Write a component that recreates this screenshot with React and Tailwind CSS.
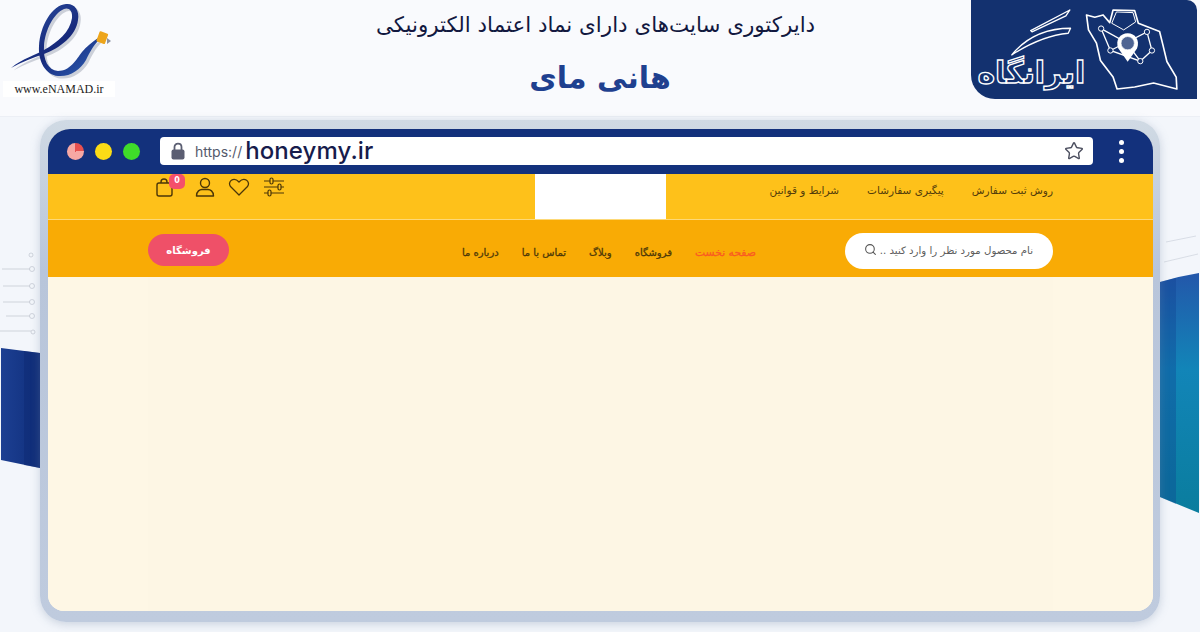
import { Star, Search } from 'lucide-react';

const topLinks = ['روش ثبت سفارش', 'پیگیری سفارشات', 'شرایط و قوانین'];
const menuLinks = ['فروشگاه', 'وبلاگ', 'تماس با ما', 'درباره ما'];

const eRibbon = 'M13 68 C25 58 38 55 46 50 C60 42 72 32 74 18 C75 10 70 7 66 9 C56 13 47 30 46 46 C45 60 50 70 60 71 C72 71 78 60 84 52 C88 47 94 42 100 38 L101 40 C95 46 92 52 88 60 C82 70 72 77 60 76 C48 75 40 62 41 46 C42 26 54 5 68 4 C76 3 82 10 80 20 C78 36 62 48 46 54 C34 58 24 62 13 68 Z';

function NamadLogo() {
    return (
        <div className="flex flex-col items-start w-[118px]">
            <svg width="116" height="78" viewBox="2 3 116 78" className="mt-[3px]">
                <defs>
                    <linearGradient id="namadBlue" x1="0" y1="0" x2="1" y2="1">
                        <stop offset="0" stopColor="#2f54a8" />
                        <stop offset="0.55" stopColor="#16287a" />
                        <stop offset="1" stopColor="#2f62b8" />
                    </linearGradient>
                </defs>
                <path d={eRibbon} fill="#b9bdc9" opacity="0.7" transform="translate(2.5 2.5)" />
                <path d={eRibbon} fill="url(#namadBlue)" />
                <rect x="100" y="32" width="9" height="11" rx="1" fill="#eda51c" transform="rotate(20 104 37)" />
                <path d="M109 38 L113 41 L109 44 Z" fill="#8c93a3" />
            </svg>
            <div className="bg-white ml-[3px] w-[112px] h-[16px] flex items-center justify-center font-['Liberation_Serif',serif] text-[12px] leading-none text-[#222]">
                www.eNAMAD.ir
            </div>
        </div>
    );
}

function IranLogo() {
    return (
        <div className="w-[226px] h-[99px] bg-[#13316f] rounded-bl-[24px] rounded-tr-[10px]">
            <svg width="226" height="99" viewBox="215 0 675 298">
                <path d="M560 45 L585 52 L610 45 L630 68 L640 30 L705 32 L716 70 L780 95 L790 135 L802 185 L830 232 L832 268 L762 250 L705 262 L652 268 L640 232 L602 182 L590 130 L566 90 Z" fill="none" stroke="#fff" strokeWidth="5" strokeLinejoin="round" />
                <path d="M636 70 L650 36 L700 38 L708 66 L672 90 Z" fill="none" stroke="#fff" strokeWidth="3" />
                <path d="M604 86 L680 128 L742 96 L757 152 L722 184 L632 152 Z M632 152 L680 128 L722 184" fill="none" stroke="#fff" strokeWidth="4" />
                <circle cx="604" cy="86" r="8" fill="#13316f" stroke="#fff" strokeWidth="3" />
                <circle cx="742" cy="96" r="8" fill="#13316f" stroke="#fff" strokeWidth="3" />
                <circle cx="757" cy="152" r="8" fill="#13316f" stroke="#fff" strokeWidth="3" />
                <circle cx="632" cy="152" r="8" fill="#13316f" stroke="#fff" strokeWidth="3" />
                <circle cx="722" cy="184" r="8" fill="#13316f" stroke="#fff" strokeWidth="3" />
                <path d="M684 186 L656 146 C645 120 662 100 684 100 C706 100 722 120 712 146 Z" fill="#fff" />
                <circle cx="684" cy="130" r="20" fill="#13316f" stroke="#fff" strokeWidth="2" opacity="0.75" />
                <path d="M335 165 C385 105 445 85 512 85 L505 100 C450 105 390 130 335 165 Z" fill="none" stroke="#fff" strokeWidth="4" strokeLinejoin="round" />
                <path d="M392 92 L510 30 L498 48 L396 96 Z" fill="none" stroke="#fff" strokeWidth="4" strokeLinejoin="round" />
                <text x="556" y="250" direction="rtl" fontFamily="DejaVu Sans" fontWeight="700" fontSize="90" fill="#13316f" stroke="#fff" strokeWidth="4" letterSpacing="-2">ایرانگاه</text>
            </svg>
        </div>
    );
}

function Decorations() {
    return (
        <>
            <svg className="absolute left-0 top-[240px]" width="40" height="240" viewBox="0 0 40 240">
                <defs>
                    <linearGradient id="leftBand" x1="0" y1="0" x2="1" y2="0">
                        <stop offset="0" stopColor="#1c3f92" />
                        <stop offset="1" stopColor="#102f7c" />
                    </linearGradient>
                </defs>
                <g fill="none" stroke="#b4bac6" strokeWidth="0.7" opacity="0.8">
                    <path d="M2 29 H30 M3 46 H30 M3 62 H30 M6 76 H30 M0 91 H31" />
                    <circle cx="31" cy="15" r="2" />
                    <circle cx="32" cy="29" r="2.5" />
                    <circle cx="32" cy="46" r="2.5" />
                    <circle cx="32" cy="62" r="2.5" />
                    <circle cx="32" cy="76" r="2.5" />
                    <circle cx="33" cy="92" r="2" />
                </g>
                <path d="M1 108 L40 113 V228 L1 220 Z" fill="url(#leftBand)" />
                <path d="M24 111 L40 113 V228 L24 225 Z" fill="#0e2a74" opacity="0.5" />
            </svg>
            <svg className="absolute right-0 top-[232px]" width="40" height="290" viewBox="0 0 40 290">
                <defs>
                    <linearGradient id="rightBand" x1="0" y1="0" x2="0" y2="1">
                        <stop offset="0" stopColor="#2357aa" />
                        <stop offset="0.4" stopColor="#1285b8" />
                        <stop offset="1" stopColor="#0a7d9e" />
                    </linearGradient>
                </defs>
                <path d="M6 10 L36 4 M4 30 L38 22" stroke="#cdd2dc" strokeWidth="0.7" fill="none" />
                <path d="M0 50 Q20 44 39 41 V281 L0 265 Z" fill="url(#rightBand)" />
                <path d="M0 50 L16 46 V272 L0 265 Z" fill="#0f3f8f" opacity="0.35" />
            </svg>
        </>
    );
}

function TopIcons() {
    return (
        <div className="flex items-start text-[#4b3608] pt-[3px]">
            <svg width="22" height="22" viewBox="0 0 22 22" fill="none" stroke="currentColor" strokeWidth="1.4">
                <path d="M7 6 V5 C7 1 13 1 13 5 V6" />
                <rect x="3" y="6" width="15" height="13" rx="2" />
            </svg>
            <svg width="20" height="21" viewBox="0 0 20 21" fill="none" stroke="currentColor" strokeWidth="1.4" className="ml-[19px]">
                <circle cx="10" cy="6" r="4.5" />
                <path d="M1.5 19 C1.5 14 5 12.5 7 12.5 H13 C15 12.5 18.5 14 18.5 19 Z" strokeLinejoin="round" />
            </svg>
            <svg width="22" height="20" viewBox="0 0 22 20" fill="none" stroke="currentColor" strokeWidth="1.3" className="ml-[13px]">
                <path d="M11 18 L2.5 9.5 C-1 5 5.5 -1 11 5 C16.5 -1 23 5 19.5 9.5 Z" strokeLinejoin="round" />
            </svg>
            <svg width="22" height="20" viewBox="0 0 22 20" fill="none" stroke="currentColor" strokeWidth="1.2" className="ml-[13px]">
                <path d="M1 4 H21 M1 10 H21 M1 16 H21" />
                <rect x="7" y="1" width="3" height="6" rx="1.5" fill="#fec11a" />
                <rect x="15" y="7" width="3" height="6" rx="1.5" fill="#fec11a" />
                <rect x="5" y="13" width="3" height="6" rx="1.5" fill="#fec11a" />
            </svg>
        </div>
    );
}

export default function App() {
    return (
        <div className="relative w-[1200px] h-[632px] overflow-hidden bg-[#f3f6fb] font-['DejaVu_Sans',sans-serif]">
            <Decorations />

            <header className="relative flex h-[117px] items-start bg-[#f9fafd] border-b border-[#eceff5]">
                <NamadLogo />
                <div dir="rtl" className="absolute left-0 top-0 w-[1191px] flex flex-col items-center pointer-events-none">
                    <div className="mt-[11px] text-[21.4px] leading-[28px] text-[#12183f]">دایرکتوری سایت‌های دارای نماد اعتماد الکترونیکی</div>
                    <div className="mt-[16px] mr-[-9px] text-[30px] leading-[46px] font-bold text-[#1f408f]">هانی مای</div>
                </div>
                <div className="ml-auto mr-[3px]">
                    <IranLogo />
                </div>
            </header>

            <main className="relative ml-[40px] mt-[3px] w-[1120px] h-[502px] rounded-[26px] bg-[linear-gradient(#d0dae4,#b8c5da_30%,#bfcbde)] pt-[9px] pb-[11px] pl-[8px] pr-[7px] shadow-[0_2px_10px_rgba(120,140,170,0.35)]">
                <div className="flex flex-col h-full rounded-t-[22px] rounded-b-[16px] overflow-hidden bg-[#fef7e5]">
                    <div className="flex h-[45px] pb-[1px] items-center shrink-0 bg-[#13317c] pl-[19px] pr-[29px]">
                        <div className="flex gap-[11px]">
                            <span className="w-[17px] h-[17px] rounded-full bg-[conic-gradient(#e8504f_0_25%,#f7a8a4_25%_100%)]" />
                            <span className="w-[17px] h-[17px] rounded-full bg-[#fbdc16]" />
                            <span className="w-[17px] h-[17px] rounded-full bg-[#3fdc2a]" />
                        </div>
                        <div className="ml-[20px] flex items-center w-[933px] h-[28px] rounded-[4px] bg-white pl-[11px] pr-[9px]">
                            <svg width="14" height="18" viewBox="0 0 14 18" fill="#5b5e72">
                                <path d="M3.5 8 V5 C3.5 0.5 10.5 0.5 10.5 5 V8" fill="none" stroke="#5b5e72" strokeWidth="1.8" />
                                <rect x="0.5" y="7.5" width="13" height="10" rx="2" />
                            </svg>
                            <span className="ml-[10px] font-['Inter',sans-serif] text-[14px] text-[#555a6c]">https://</span>
                            <span className="ml-[3px] font-['Inter',sans-serif] text-[24px] leading-none font-medium tracking-[0.1px] text-[#171c4c]">honeymy.ir</span>
                            <Star className="ml-auto text-[#4d5060]" size={20} strokeWidth={1.7} />
                        </div>
                        <div className="ml-auto flex flex-col gap-[4px]">
                            <span className="w-[5px] h-[5px] rounded-full bg-white" />
                            <span className="w-[5px] h-[5px] rounded-full bg-white" />
                            <span className="w-[5px] h-[5px] rounded-full bg-white" />
                        </div>
                    </div>

                    <div className="relative flex h-[46px] shrink-0 items-start bg-[#fec11a] border-b border-[#fdd977] pl-[106px] pr-[100px]">
                        <TopIcons />
                        <div className="absolute left-[487px] top-0 w-[131px] h-[45px] bg-white" />
                        <nav dir="rtl" className="ml-auto flex gap-[28px] pt-[9px] text-[10.5px] leading-[15px] text-[#533c0a]">
                            {topLinks.map((link) => (
                                <a key={link}>{link}</a>
                            ))}
                        </nav>
                        <span className="absolute left-[121px] top-0 w-[16px] h-[15px] rounded-[5px] bg-[#f4506a] text-white text-[8px] font-bold leading-[14px] text-center">0</span>
                    </div>

                    <div dir="rtl" className="flex h-[57px] shrink-0 items-center bg-[#f9ab05] pl-[100px] pr-[100px]">
                        <div className="mt-[5px] flex items-center w-[208px] h-[36px] rounded-full bg-white pr-[20px] pl-[24px] text-[10.2px] text-[#5c5c5c]">
                            <span className="whitespace-nowrap">نام محصول مورد نظر را وارد کنید ..</span>
                            <Search className="mr-auto shrink-0 text-[#555] -mt-[3px] ml-[-5px]" size={13} />
                        </div>
                        <nav className="mr-[89px] mt-[10px] flex gap-[23px] text-[10px] text-[#4f3a08] [-webkit-text-stroke:0.3px_#4f3a08]">
                            <a className="text-[10.8px] text-[#fa5b22] [-webkit-text-stroke:0.3px_#fa5b22]">صفحه نخست</a>
                            {menuLinks.map((link) => (
                                <a key={link}>{link}</a>
                            ))}
                        </nav>
                        <a className="mr-auto mt-[3px] flex items-center justify-center w-[81px] h-[32px] rounded-full bg-[#ef5068] text-white text-[10px] font-bold">فروشگاه</a>
                    </div>

                    <div className="flex flex-1 justify-center bg-[#fef7e5]">
                        <div className="w-[905px] bg-[#fdf6e4]" />
                    </div>
                </div>
            </main>
        </div>
    );
}
